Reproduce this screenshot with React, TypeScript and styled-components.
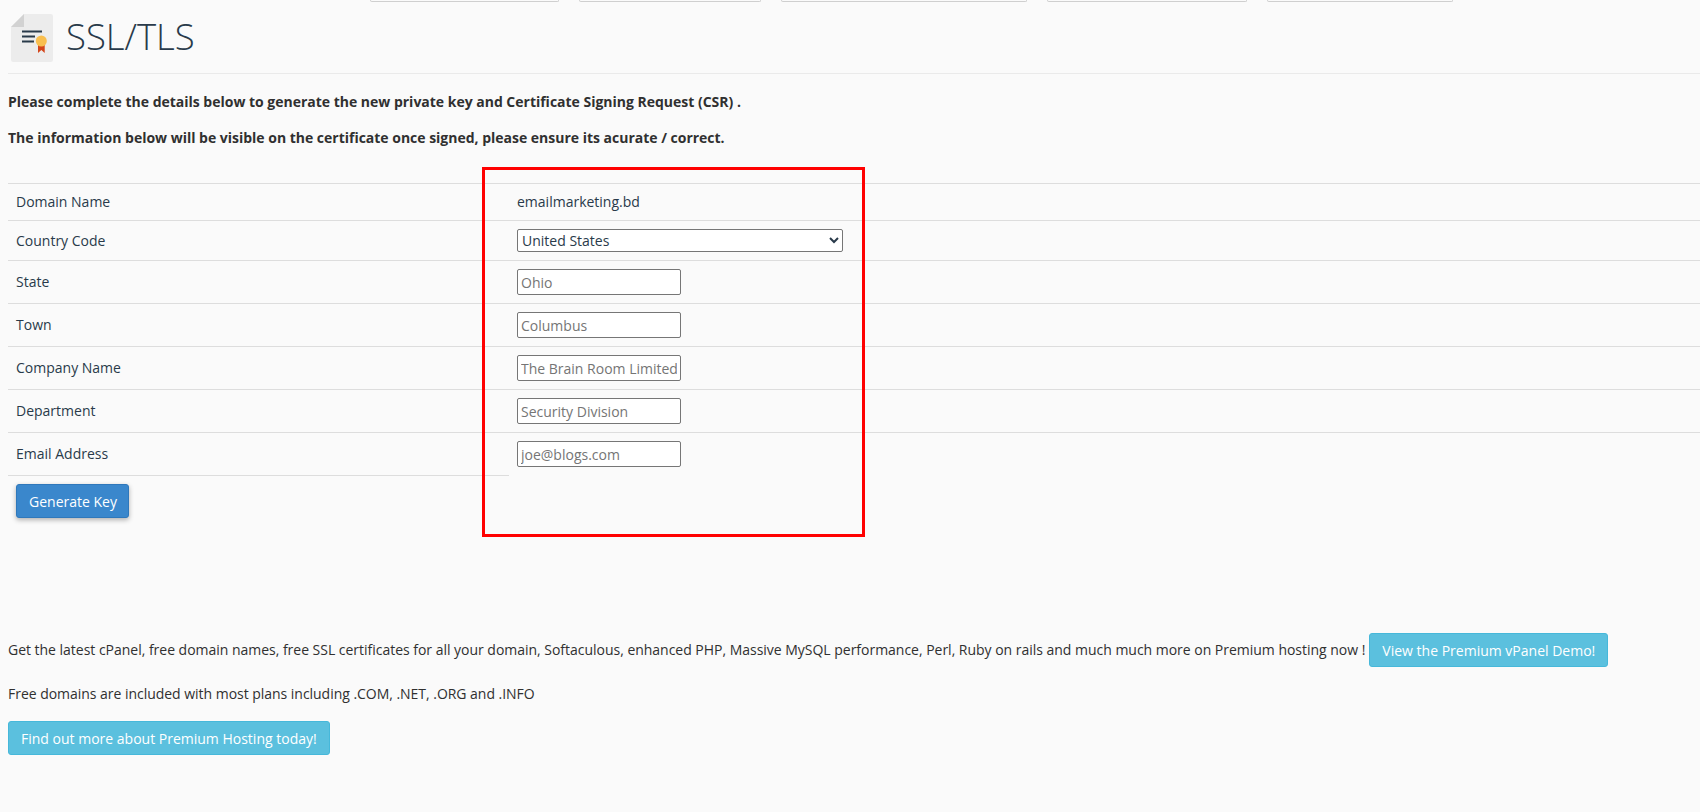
import styled, { createGlobalStyle } from "styled-components";

const GlobalStyle = createGlobalStyle`
  html, body {
    margin: 0;
    padding: 0;
    background: #fafafa;
    color: #293a4a;
    font-family: "Open Sans", sans-serif;
    font-size: 14px;
    line-height: 20px;
  }
`;

const Page = styled.div`
  position: relative;
  width: 1700px;
  height: 812px;
  padding: 0 0 0 8px;
  box-sizing: border-box;
  overflow: hidden;
`;

const TabStrip = styled.div`
  display: flex;
  gap: 20px;
  height: 3px;
  margin-left: 362px;
`;

const TabEnd = styled.div<{ $w: number }>`
  width: ${(p) => p.$w}px;
  height: 2px;
  border: 1px solid #cfcfcf;
  border-top: none;
  border-radius: 0 0 6px 6px;
  box-sizing: border-box;
`;

const Header = styled.div`
  display: flex;
  align-items: center;
  gap: 13px;
  height: 70px;
  padding-left: 3px;
  border-bottom: 1px solid #eaeaea;
`;

const Title = styled.h1`
  margin: 0 0 5px;
  font-size: 36.5px;
  line-height: 40px;
  font-weight: 300;
  color: #293a4a;
`;

const Lead = styled.p`
  margin: 0 0 16px;
  font-weight: 700;
  color: #303030;
  height: 20px;
  letter-spacing: -0.01px;
`;

const Intro = styled.div`
  padding-top: 18px;
`;

const FormTable = styled.table`
  width: 100%;
  margin-top: 35px;
  border-collapse: collapse;
  border-top: 1px solid #dddddd;
`;

const Row = styled.tr<{ $h: number }>`
  height: ${(p) => p.$h}px;
  border-bottom: 1px solid #dddddd;
`;

const LastRow = styled.tr`
  height: 43px;
`;

const LabelCell = styled.td`
  width: 501px;
  padding: 0 8px;
  box-sizing: border-box;
  color: #293a4a;
`;

const LastLabelCell = styled(LabelCell)`
  border-bottom: 1px solid #dddddd;
`;

const ValueCell = styled.td`
  padding: 0 8px;
`;

const CountrySelect = styled.select`
  display: block;
  width: 326px;
  height: 23px;
  padding: 0;
  background: #ffffff;
  border: 1px solid #767676;
  border-radius: 2px;
  font-family: "Open Sans", sans-serif;
  font-size: 14px;
  color: #293a4a;
`;

const TextField = styled.input`
  display: block;
  width: 164px;
  height: 26px;
  padding: 1px 3px;
  box-sizing: border-box;
  background: #ffffff;
  border: 1px solid #767676;
  border-radius: 2px;
  font-family: "Open Sans", sans-serif;
  font-size: 14px;

  &::placeholder {
    color: #757575;
    opacity: 1;
  }
`;

const ActionButton = styled.button<{ $tone: "primary" | "info" }>`
  height: 34px;
  padding: ${(p) => (p.$tone === "primary" ? "0 11px 0 12px" : "0 12px")};
  font-family: "Open Sans", sans-serif;
  font-size: 14px;
  color: #ffffff;
  white-space: nowrap;
  border-radius: 3px;
  cursor: pointer;
  background: ${(p) => (p.$tone === "primary" ? "#3a87cc" : "#5bc0de")};
  border: 1px solid ${(p) => (p.$tone === "primary" ? "#2f78bb" : "#46b8da")};
  box-shadow: ${(p) => (p.$tone === "primary" ? "0 2px 5px rgba(0,0,0,0.3)" : "none")};
`;

const GenerateWrap = styled.div`
  padding: 8px 0 0 8px;
`;

const RedFrame = styled.div`
  position: absolute;
  left: 482px;
  top: 167px;
  width: 383px;
  height: 370px;
  box-sizing: border-box;
  border: 3px solid #ff0000;
  pointer-events: none;
`;

const Promo = styled.div`
  margin-top: 115px;
`;

const PromoLine = styled.div`
  display: flex;
  align-items: center;
  gap: 4px;
  height: 34px;
  white-space: nowrap;
  color: #303030;
  letter-spacing: -0.02px;
`;

const PromoNote = styled.p`
  margin: 17px 0 17px;
  height: 20px;
  color: #303030;
  letter-spacing: -0.03px;
`;

function CertIcon() {
  return (
    <svg width="42" height="48" viewBox="0 0 42 48">
      <path d="M13 0h27a2 2 0 0 1 2 2v44a2 2 0 0 1-2 2H2a2 2 0 0 1-2-2V13z" fill="#ececec" />
      <path d="M13 0v13H0z" fill="#d2d2d2" />
      <rect x="11" y="16.500" width="20" height="2" fill="#293a4a" />
      <rect x="11" y="21.500" width="13" height="2" fill="#293a4a" />
      <rect x="11" y="26.500" width="12" height="2" fill="#293a4a" />
      <path d="M27 29h6.700v10l-3.350-3-3.350 3z" fill="#d4451a" />
      <circle cx="30.300" cy="27" r="5.500" fill="#f9bf4f" />
    </svg>
  );
}

const fields = [
  { label: "State", placeholder: "Ohio", h: 43 },
  { label: "Town", placeholder: "Columbus", h: 43 },
  { label: "Company Name", placeholder: "The Brain Room Limited", h: 43 },
  { label: "Department", placeholder: "Security Division", h: 43 },
];

export default function App() {
  return (
    <>
      <GlobalStyle />
      <Page>
        <TabStrip>
          <TabEnd $w={189} />
          <TabEnd $w={182} />
          <TabEnd $w={246} />
          <TabEnd $w={200} />
          <TabEnd $w={186} />
        </TabStrip>
        <Header>
          <CertIcon />
          <Title>SSL/TLS</Title>
        </Header>
        <Intro>
          <Lead>Please complete the details below to generate the new private key and Certificate Signing Request (CSR) .</Lead>
          <Lead>The information below will be visible on the certificate once signed, please ensure its acurate / correct.</Lead>
        </Intro>
        <FormTable>
          <tbody>
            <Row $h={37}>
              <LabelCell>Domain Name</LabelCell>
              <ValueCell>emailmarketing.bd</ValueCell>
            </Row>
            <Row $h={40}>
              <LabelCell>Country Code</LabelCell>
              <ValueCell>
                <CountrySelect defaultValue="United States">
                  <option>United States</option>
                </CountrySelect>
              </ValueCell>
            </Row>
            {fields.map((f) => (
              <Row key={f.label} $h={f.h}>
                <LabelCell>{f.label}</LabelCell>
                <ValueCell>
                  <TextField placeholder={f.placeholder} />
                </ValueCell>
              </Row>
            ))}
            <LastRow>
              <LastLabelCell>Email Address</LastLabelCell>
              <ValueCell>
                <TextField placeholder="joe@blogs.com" />
              </ValueCell>
            </LastRow>
          </tbody>
        </FormTable>
        <GenerateWrap>
          <ActionButton $tone="primary">Generate Key</ActionButton>
        </GenerateWrap>
        <RedFrame />
        <Promo>
          <PromoLine>
            Get the latest cPanel, free domain names, free SSL certificates for all your domain, Softaculous, enhanced PHP, Massive MySQL performance, Perl, Ruby on rails and much much more on Premium hosting now !
            <ActionButton $tone="info">View the Premium vPanel Demo!</ActionButton>
          </PromoLine>
          <PromoNote>Free domains are included with most plans including .COM, .NET, .ORG and .INFO</PromoNote>
          <ActionButton $tone="info">Find out more about Premium Hosting today!</ActionButton>
        </Promo>
      </Page>
    </>
  );
}
